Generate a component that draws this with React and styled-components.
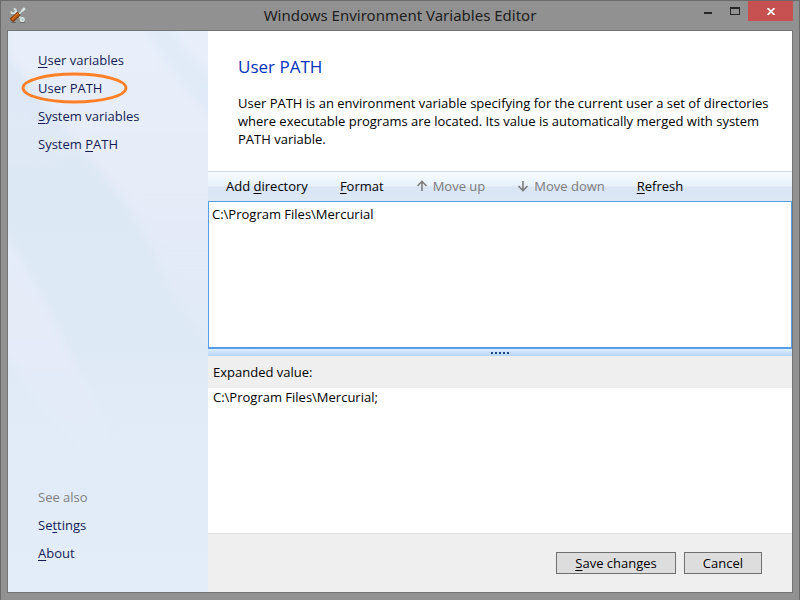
import styled, { createGlobalStyle } from "styled-components";

const GlobalStyle = createGlobalStyle`
    * {
        box-sizing: border-box;
    }

    body {
        margin: 0;
        font-family: "Open Sans", "Noto Sans", sans-serif;
        font-size: 13px;
        line-height: 18px;
        color: #000;
    }

    button, select, textarea {
        font: inherit;
        color: inherit;
    }
`;

const Window = styled.div`
    display: flex;
    flex-direction: column;
    min-height: 100vh;
    padding: 0 6px 7px;
    border: 1px solid #6b6b6b;
    background-color: #919191;
`;

const TitleBar = styled.header`
    display: grid;
    grid-template-columns: 1fr auto 1fr;
    height: 29px;
`;

const AppIcon = styled.svg`
    width: 16px;
    height: 16px;
    margin: 6px 3px;
`;

const Title = styled.h1`
    margin: 0;
    font-family: "Noto Sans", "Open Sans", sans-serif;
    font-size: 15px;
    font-weight: 400;
    line-height: 28px;
    color: #202020;
`;

const WindowControls = styled.div`
    display: flex;
    justify-content: flex-end;
    height: 20px;
`;

const ControlButton = styled.button`
    display: flex;
    width: ${(props) => (props.$close ? "45px" : "27px")};
    padding: 0;
    border: none;
    justify-content: center;
    align-items: center;
    background-color: ${(props) => (props.$close ? "#c75050" : "transparent")};
`;

const Client = styled.div`
    display: flex;
    flex: 1;
    border: 1px solid #737373;
`;

const Sidebar = styled.aside`
    position: relative;
    display: flex;
    flex-direction: column;
    justify-content: space-between;
    flex: 0 0 200px;
    padding: 20px 30px 30px;
    background: linear-gradient(180deg, #dee8f6, #dde8f5 30%, #dee9f6 55%, #e1ebf8 65%, #e2edf9);
`;

const Aurora = styled.svg`
    position: absolute;
    inset: 0;
    width: 100%;
    height: 100%;
    pointer-events: none;
`;

const NavList = styled.nav`
    position: relative;
    display: flex;
    flex-direction: column;
    align-items: flex-start;
    gap: 10px;
`;

const NavLink = styled.a`
    position: relative;
    color: #151c55;
    text-decoration: none;
`;

const NavCaption = styled.span`
    color: #808080;
`;

const Marker = styled.svg`
    position: absolute;
    top: -7px;
    left: -17px;
    width: 107px;
    height: 32px;
    pointer-events: none;
`;

const Key = styled.span`
    text-decoration: underline;
    text-decoration-thickness: 1px;
    text-underline-offset: 2px;
    text-decoration-skip-ink: none;
`;

const Main = styled.main`
    display: flex;
    flex-direction: column;
    flex: 1;
    min-width: 0;
    background-color: #fff;
`;

const Intro = styled.section`
    padding: 24px 20px 23px 30px;
`;

const Heading = styled.h2`
    margin: 0 0 15px;
    font-size: 17px;
    font-weight: 400;
    line-height: 24px;
    color: #0033bc;
`;

const Desc = styled.p`
    margin: 0;
`;

const Toolbar = styled.div`
    display: flex;
    height: 30px;
    padding: 0 2px 2px;
    border-top: 1px solid #cdd9e6;
    background: linear-gradient(180deg, #f8fcff, #e7f1fb 48%, #dae5f4 52%, #dde8f5);
`;

const ToolButton = styled.button`
    display: flex;
    align-items: center;
    gap: 5px;
    padding: 0 16px;
    border: none;
    background: none;

    &:disabled {
        color: #7c7c7c;
    }
`;

const PathList = styled.select`
    flex: 1 1 148px;
    width: 100%;
    padding: 3px 0;
    border: 1px solid #569de5;
    border-bottom: 2px solid #569de5;
    border-radius: 0;
    outline: none;
    background-color: #fff;
`;

const PathOption = styled.option`
    padding: 0 3px;
    min-height: 18px;
`;

const Splitter = styled.div`
    display: flex;
    justify-content: center;
    gap: 2px;
    height: 7px;
    padding-top: 3px;
    background: linear-gradient(180deg, #e0eeff, #b3d3fb);
`;

const Grip = styled.span`
    width: 2px;
    height: 2px;
    background-color: #1f4784;
`;

const ValueLabel = styled.label`
    padding: 7px 5px;
    background-color: #efefef;
`;

const ExpandedValue = styled.textarea`
    flex: 1 1 145px;
    width: 100%;
    padding: 0 5px;
    border: none;
    outline: none;
    resize: none;
    background-color: #fff;
`;

const Footer = styled.footer`
    display: flex;
    justify-content: flex-end;
    gap: 8px;
    padding: 18px 30px;
    border-top: 1px solid #dfdfdf;
    background-color: #efefef;
`;

const Button = styled.button`
    min-width: 78px;
    height: 22px;
    padding: 0 18px;
    border: 1px solid #707070;
    background-color: #dddddd;
    line-height: 20px;
`;

const Arrow = ({ down }) => (
    <svg width="12" height="12" viewBox="0 0 12 12" fill="none" stroke="#7c7c7c" strokeWidth="1.6">
        <path d={down ? "M6 1v9.5M1.5 6L6 10.7 10.5 6" : "M6 11V1.5M1.5 6L6 1.3 10.5 6"} />
    </svg>
);

const ToolsIcon = () => (
    <AppIcon viewBox="0 0 16 16" fill="none" aria-hidden="true">
        <path d="M1 15.4h5M10 15.4h5" stroke="#6b6b6b" />
        <path d="M4.5 4.5l8 8" stroke="#b9cbc9" strokeWidth="2" />
        <path d="M3.6 1.4l2 1.2.4 2-1.6 1.8-2.4-.2L.9 4.6" stroke="#d5e5e3" strokeWidth="1.8" />
        <circle cx="12.3" cy="12.5" r="1.8" stroke="#d5e5e3" strokeWidth="1.5" />
        <path d="M8.5 7.5l4-4" stroke="#dce9e7" strokeWidth="1.4" />
        <path d="M12.2 3.8l2.6-2.6" stroke="#dce9e7" strokeWidth="2.6" />
        <path d="M1.4 13.5l7.6-7" stroke="#7a3606" strokeWidth="4.8" />
        <path d="M2 12.8l6.5-6" stroke="#d4701c" strokeWidth="2.8" />
        <path d="M2.6 12.8l6-5.5" stroke="#9c4a0c" strokeWidth=".8" />
    </AppIcon>
);

// soft light beams behind the navigation
const Beams = () => (
    <Aurora viewBox="0 0 200 561" preserveAspectRatio="none" aria-hidden="true">
        <defs>
            <linearGradient id="upper" x1="0" y1="0" x2="0" y2="1">
                <stop offset="0" stopColor="#e9f0fa" />
                <stop offset=".5" stopColor="#e6ecf8" />
                <stop offset="1" stopColor="#e3eaf7" stopOpacity=".4" />
            </linearGradient>
            <linearGradient id="lower" x1="0" y1="0" x2="0" y2="1">
                <stop offset="0" stopColor="#e5edf9" />
                <stop offset=".6" stopColor="#e5ebf8" />
                <stop offset="1" stopColor="#e3ecf8" stopOpacity=".3" />
            </linearGradient>
            <filter id="soft" x="-20%" y="-20%" width="140%" height="140%">
                <feGaussianBlur stdDeviation="4" />
            </filter>
        </defs>
        <g filter="url(#soft)">
            <path d="M0 -20H220V335Q175 290 150 230T72 118Q40 70 0 25Z" fill="url(#upper)" />
            <path d="M132 -10Q155 40 210 95V45Q180 25 162 -10Z" fill="#dce7f6" opacity=".6" />
            <path d="M-10 70Q30 80 70 120Q30 140 -10 130Z" fill="#e1eaf7" opacity=".6" />
            <path d="M-10 195Q20 235 48 295T102 400Q95 420 75 422Q40 380 -10 315Z" fill="url(#lower)" />
        </g>
    </Aurora>
);

const App = () => {
    return (
        <>
            <GlobalStyle />
            <Window>
                <TitleBar>
                    <ToolsIcon />
                    <Title>Windows Environment Variables Editor</Title>
                    <WindowControls>
                        <ControlButton aria-label="Minimize">
                            <svg width="10" height="10">
                                <path d="M1 6h8v2H1z" fill="#262626" />
                            </svg>
                        </ControlButton>
                        <ControlButton aria-label="Maximize">
                            <svg width="10" height="8">
                                <path d="M0 0h10v8H0zM1 2v5h8V2z" fill="#262626" fillRule="evenodd" />
                            </svg>
                        </ControlButton>
                        <ControlButton $close aria-label="Close">
                            <svg width="8" height="7" viewBox="0 0 8 7" stroke="#fff" strokeWidth="1.7">
                                <path d="M.5 0l7 7M7.5 0l-7 7" />
                            </svg>
                        </ControlButton>
                    </WindowControls>
                </TitleBar>
                <Client>
                    <Sidebar>
                        <Beams />
                        <NavList>
                            <NavLink href="#user-variables">
                                <Key>U</Key>ser variables
                            </NavLink>
                            <NavLink href="#user-path">
                                User PATH
                                <Marker viewBox="0 0 107 32" fill="none">
                                    <ellipse cx="53.5" cy="16" rx="51.5" ry="14" stroke="#ff7f27" strokeWidth="2.8" />
                                </Marker>
                            </NavLink>
                            <NavLink href="#system-variables">
                                <Key>S</Key>ystem variables
                            </NavLink>
                            <NavLink href="#system-path">
                                System <Key>P</Key>ATH
                            </NavLink>
                        </NavList>
                        <NavList>
                            <NavCaption>See also</NavCaption>
                            <NavLink href="#settings">
                                Se<Key>t</Key>tings
                            </NavLink>
                            <NavLink href="#about">
                                <Key>A</Key>bout
                            </NavLink>
                        </NavList>
                    </Sidebar>
                    <Main>
                        <Intro>
                            <Heading>User PATH</Heading>
                            <Desc>
                                User PATH is an environment variable specifying for the current user a set of
                                directories where executable programs are located. Its value is automatically
                                merged with system PATH variable.
                            </Desc>
                        </Intro>
                        <Toolbar>
                            <ToolButton>
                                <span>
                                    Add <Key>d</Key>irectory
                                </span>
                            </ToolButton>
                            <ToolButton>
                                <span>
                                    <Key>F</Key>ormat
                                </span>
                            </ToolButton>
                            <ToolButton disabled>
                                <Arrow />
                                Move up
                            </ToolButton>
                            <ToolButton disabled>
                                <Arrow down />
                                Move down
                            </ToolButton>
                            <ToolButton>
                                <span>
                                    <Key>R</Key>efresh
                                </span>
                            </ToolButton>
                        </Toolbar>
                        <PathList size={7} aria-label="Directories">
                            <PathOption>C:\Program Files\Mercurial</PathOption>
                        </PathList>
                        <Splitter>
                            <Grip />
                            <Grip />
                            <Grip />
                            <Grip />
                            <Grip />
                        </Splitter>
                        <ValueLabel htmlFor="expanded">Expanded value:</ValueLabel>
                        <ExpandedValue id="expanded" readOnly value="C:\Program Files\Mercurial;" />
                        <Footer>
                            <Button>
                                <Key>S</Key>ave changes
                            </Button>
                            <Button>Cancel</Button>
                        </Footer>
                    </Main>
                </Client>
            </Window>
        </>
    );
};

export default App;
